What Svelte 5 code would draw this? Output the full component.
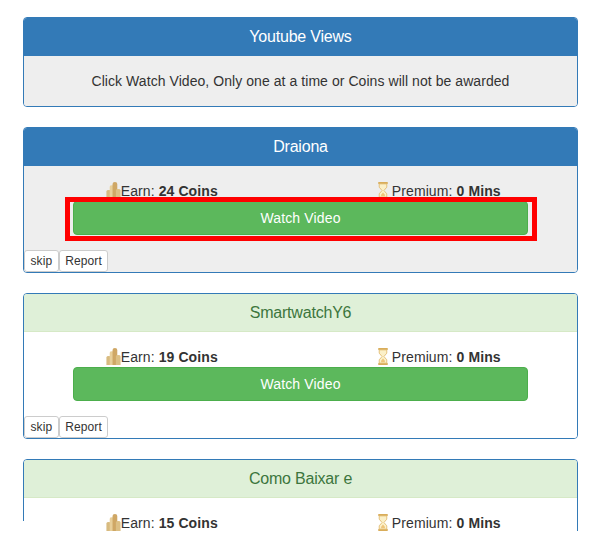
<script>
  const items = [
    { title: 'Draiona', coins: 24, active: true, full: true },
    { title: 'SmartwatchY6', coins: 19, full: true },
    { title: 'Como Baixar e', coins: 15, full: false }
  ];
</script>

{#snippet coin()}
  <svg class="ico" viewBox="0 0 15 18" aria-hidden="true">
    <path d="M0 10q0-1.500 2.500-1.500T5 10v8H0z" fill="#d8bb80" />
    <path d="M3.500 5q0-1.500 2.500-1.500T8.500 5v13h-5z" fill="#e8cf9a" />
    <path d="M6.500 2q0-2 2.500-2t2.500 2v16h-5z" fill="#cfa765" />
    <path d="M10 9q0-1.500 2.500-1.500T15 9v9h-5z" fill="#dcbf84" />
  </svg>
{/snippet}

{#snippet glass()}
  <svg class="ico glass" viewBox="0 0 10 18" aria-hidden="true">
    <path d="M0 0h10v2H0zM0 16h10v2H0z" fill="#d9ad5a" />
    <path d="M1 2h8v3.500L6 9l3 3.500V16H1v-3.500L4 9 1 5.500z" fill="#fbf0c8" stroke="#e3bf78" />
    <path d="M3 13.500L5 11l2 2.500V15H3z" fill="#eec47a" />
  </svg>
{/snippet}

<div class="page">
  <section class="panel">
    <h2 class="head blue">Youtube Views</h2>
    <div class="intro">Click Watch Video, Only one at a time or Coins will not be awarded</div>
  </section>

  {#each items as item}
    <section class="panel">
      <h2 class="head" class:blue={item.active} class:green={!item.active}>{item.title}</h2>
      <div class="body" class:gray={item.active}>
        <div class="stats">
          <div class="stat">{@render coin()}Earn: <b>{item.coins} Coins</b></div>
          <div class="stat premium">{@render glass()}Premium: <b>0 Mins</b></div>
        </div>
        {#if item.full}
          <div class="watch-wrap" class:framed={item.active}>
            <button class="watch">Watch Video</button>
          </div>
          <div class="actions">
            <button class="small">skip</button><button class="small">Report</button>
          </div>
        {/if}
      </div>
    </section>
  {/each}

  <div class="cut-left"></div>
</div>

<style>
  :global(body) {
    margin: 0;
    background: #fff;
  }
  .page {
    position: relative;
    height: 531px;
    overflow: hidden;
    padding: 17px 26px 0 23px;
    box-sizing: border-box;
    font-family: "Liberation Sans", Arial, sans-serif;
    color: #333;
    font-size: 14px;
  }
  .panel {
    border: 1px solid #337ab7;
    border-radius: 4px;
    margin-bottom: 20px;
    overflow: hidden;
  }
  .head {
    margin: 0;
    height: 38px;
    line-height: 38px;
    text-align: center;
    font-size: 16px;
    font-weight: 400;
    letter-spacing: -0.2px;
  }
  .blue {
    background: #337ab7;
    color: #fff;
  }
  .green {
    background: #dff0d8;
    color: #3c763d;
    border-bottom: 1px solid #d6e9c6;
    height: 37px;
    line-height: 37px;
  }
  .intro {
    background: #eee;
    height: 50px;
    line-height: 50px;
    text-align: center;
    letter-spacing: 0.06px;
  }
  .body {
    background: #fff;
    height: 106px;
    display: flex;
    flex-direction: column;
  }
  .body.gray {
    background: #eee;
  }
  .stats {
    display: grid;
    grid-template-columns: 1fr 1fr;
    margin-top: 15px;
    height: 20px;
    line-height: 20px;
    text-align: center;
    letter-spacing: 0.1px;
  }
  .stat {
    white-space: nowrap;
    margin-left: -1px;
  }
  .premium {
    margin-left: 0;
    padding-left: 1px;
  }
  .ico {
    width: 15px;
    height: 17px;
    vertical-align: -3px;
  }
  .glass {
    width: 10px;
    margin-right: 4px;
  }
  .watch-wrap {
    margin: 0 49px;
    position: relative;
  }
  .framed::after {
    content: "";
    position: absolute;
    inset: -4px -9px -6px -8px;
    border: 5px solid #f00;
    pointer-events: none;
  }
  .watch {
    display: block;
    width: 100%;
    height: 34px;
    padding: 0;
    background: #5cb85c;
    border: 1px solid #4cae4c;
    border-radius: 4px;
    color: #fff;
    font: 14px "Liberation Sans", Arial, sans-serif;
    letter-spacing: 0.15px;
  }
  .actions {
    display: flex;
    margin-top: auto;
  }
  .small {
    height: 22px;
    padding: 0 5.5px;
    background: #fff;
    border: 1px solid #ccc;
    border-radius: 3px;
    color: #333;
    font: 12px "Liberation Sans", Arial, sans-serif;
    letter-spacing: 0.1px;
  }
  .cut-left {
    position: absolute;
    left: 0;
    bottom: 0;
    width: 100px;
    height: 10px;
    background: #fff;
  }
</style>
